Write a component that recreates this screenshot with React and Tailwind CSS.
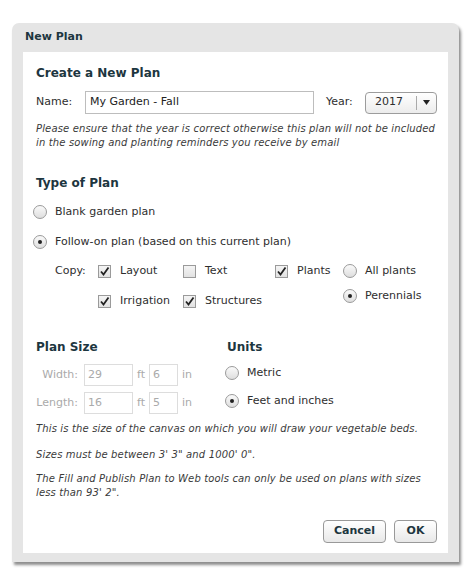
import React from 'react';

const font = { fontFamily: '"DejaVu Sans", Verdana, sans-serif' };

function Check({ on }) {
  return (
    <span className="w-[13px] h-[13px] border border-[#9a9a9a] bg-gradient-to-b from-[#f4f4f4] to-[#e2e2e2] flex items-center justify-center shrink-0">
      {on && (
        <svg width="11" height="11" viewBox="0 0 11 11">
          <path d="M2 5.5 L4.5 8.5 L9.5 1.5" fill="none" stroke="#222" strokeWidth="1.8" />
        </svg>
      )}
    </span>
  );
}

function Radio({ on }) {
  return (
    <span className="w-[14px] h-[14px] rounded-full border border-[#9a9a9a] bg-gradient-to-b from-[#fafafa] to-[#dedede] flex items-center justify-center shrink-0">
      {on && <span className="w-[4px] h-[4px] rounded-full bg-[#222]" />}
    </span>
  );
}

function RadioRow({ on, children, className = '' }) {
  return (
    <div className={'h-[20px] flex items-center ' + className}>
      <Radio on={on} />
      <span className="ml-[8px]">{children}</span>
    </div>
  );
}

function CheckItem({ on, children, w }) {
  return (
    <div className={'flex items-center ' + w}>
      <Check on={on} />
      <span className="ml-[9px]">{children}</span>
    </div>
  );
}

function SizeRow({ label, ft, inch, className = '' }) {
  return (
    <div className={'h-[22px] flex items-center text-[#aaa] ' + className}>
      <span className="w-[42px] text-right">{label}</span>
      <span className="ml-[6px] w-[49px] h-[22px] border border-[#ddd] px-[3px] flex items-center">{ft}</span>
      <span className="ml-[4px] w-[12px]">ft</span>
      <span className="w-[29px] h-[22px] border border-[#ddd] px-[3px] flex items-center">{inch}</span>
      <span className="ml-[4px]">in</span>
    </div>
  );
}

export default function App() {
  return (
    <div className="min-h-[586px] bg-white pt-[23px] pl-[12px] text-[11px] text-[#2e2e2e]" style={font}>
      <div className="w-[447px] rounded-t-[7px] bg-[#e5e5e5] px-[11px] pb-[9px] shadow-[2px_3px_3px_rgba(0,0,0,0.45)]">
        <div className="h-[29px] flex items-center pl-[2px] font-bold text-[#1d3640]">New Plan</div>

        <div className="bg-white h-[501px] pl-[13px] pr-[11px] pt-[12px]">
          <div className="h-[18px] leading-[18px] text-[12px] font-bold text-[#1d3640]">Create a New Plan</div>

          <div className="mt-[9px] h-[23px] flex items-center">
            <span className="w-[49px]">Name:</span>
            <span className="w-[229px] h-[23px] border border-[#bdbdbd] px-[4px] flex items-center text-[#222]">My Garden - Fall</span>
            <span className="ml-[12px] w-[39px]">Year:</span>
            <span className="w-[72px] h-[22px] rounded-[4px] border border-[#9c9c9c] bg-gradient-to-b from-white to-[#ececec] flex items-center">
              <span className="flex-1 pl-[9px]">2017</span>
              <span className="w-px h-[14px] bg-[#aaa]" />
              <span className="w-[19px] flex justify-center">
                <svg width="7" height="5" viewBox="0 0 7 5"><path d="M0 0 H7 L3.5 5 Z" fill="#222" /></svg>
              </span>
            </span>
          </div>

          <p className="mt-[8px] italic leading-[14px] text-[10px] tracking-[0.15px] text-[#3a3a3a]">
            Please ensure that the year is correct otherwise this plan will not be included in the sowing and planting reminders you receive by email
          </p>

          <div className="mt-[24px] h-[18px] leading-[18px] text-[12px] font-bold text-[#1d3640]">Type of Plan</div>

          <RadioRow className="mt-[10px] -ml-[3px]">Blank garden plan</RadioRow>
          <RadioRow on className="mt-[10px] -ml-[3px]">Follow-on plan (based on this current plan)</RadioRow>

          <div className="mt-[9px] flex pl-[19px]">
            <div className="flex flex-col gap-[10px]">
              <div className="h-[20px] flex items-center">
                <span className="w-[43px]">Copy:</span>
                <CheckItem on w="w-[85px]">Layout</CheckItem>
                <CheckItem w="w-[92px]">Text</CheckItem>
                <CheckItem on w="w-[68px]">Plants</CheckItem>
              </div>
              <div className="h-[20px] flex items-center pl-[43px]">
                <CheckItem on w="w-[85px]">Irrigation</CheckItem>
                <CheckItem on w="w-[92px]">Structures</CheckItem>
              </div>
            </div>
            <div className="flex flex-col gap-[5px]">
              <RadioRow>All plants</RadioRow>
              <RadioRow on>Perennials</RadioRow>
            </div>
          </div>

          <div className="mt-[27px] flex">
            <div className="w-[191px]">
              <div className="h-[18px] leading-[18px] text-[12px] font-bold text-[#1d3640]">Plan Size</div>
              <SizeRow className="mt-[8px]" label="Width:" ft="29" inch="6" />
              <SizeRow className="mt-[6px]" label="Length:" ft="16" inch="5" />
            </div>
            <div>
              <div className="h-[18px] leading-[18px] text-[12px] font-bold text-[#1d3640]">Units</div>
              <RadioRow className="mt-[7px] -ml-[2px]">Metric</RadioRow>
              <RadioRow on className="mt-[8px] -ml-[2px]">Feet and inches</RadioRow>
            </div>
          </div>

          <div className="italic leading-[14px] text-[10px] tracking-[0.15px] text-[#3a3a3a]">
            <p className="mt-[8px]">This is the size of the canvas on which you will draw your vegetable beds.</p>
            <p className="mt-[12px]">Sizes must be between 3' 3" and 1000' 0".</p>
            <p className="mt-[10px]">The Fill and Publish Plan to Web tools can only be used on plans with sizes less than 93' 2".</p>
          </div>

          <div className="mt-[20px] flex justify-end gap-[8px]">
            <button className="w-[63px] h-[23px] rounded-[4px] border border-[#999] bg-gradient-to-b from-white to-[#e8e8e8] font-bold text-[#1d3640]">Cancel</button>
            <button className="w-[43px] h-[23px] rounded-[4px] border border-[#999] bg-gradient-to-b from-white to-[#e8e8e8] font-bold text-[#1d3640]">OK</button>
          </div>
        </div>
      </div>
    </div>
  );
}
